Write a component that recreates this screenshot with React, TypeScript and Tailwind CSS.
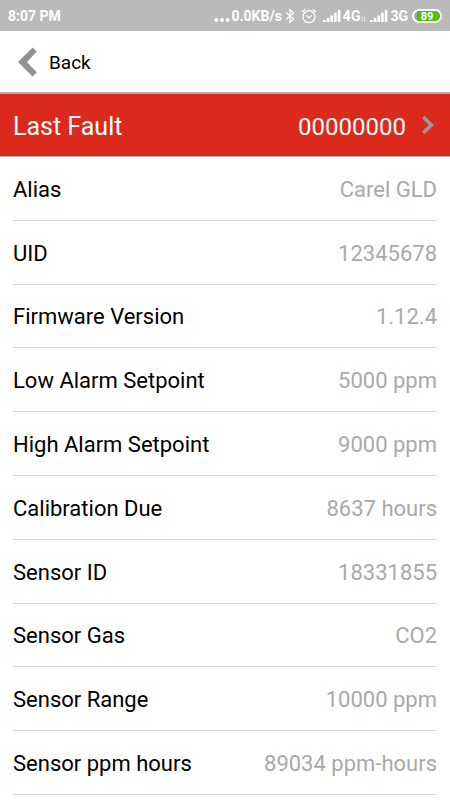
import React from 'react';

type Reading = {
  label: string;
  value: string;
};

const readings: Reading[] = [
  { label: 'Alias', value: 'Carel GLD' },
  { label: 'UID', value: '12345678' },
  { label: 'Firmware Version', value: '1.12.4' },
  { label: 'Low Alarm Setpoint', value: '5000 ppm' },
  { label: 'High Alarm Setpoint', value: '9000 ppm' },
  { label: 'Calibration Due', value: '8637 hours' },
  { label: 'Sensor ID', value: '18331855' },
  { label: 'Sensor Gas', value: 'CO2' },
  { label: 'Sensor Range', value: '10000 ppm' },
  { label: 'Sensor ppm hours', value: '89034 ppm-hours' },
];

const SignalBars: React.FC = () => (
  <svg width="18" height="14" viewBox="0 0 18 14" fill="currentColor" aria-hidden="true">
    <rect x="0" y="11" width="2.6" height="2" />
    <rect x="3.7" y="9" width="2.6" height="4" />
    <rect x="7.4" y="6.5" width="2.6" height="6.5" />
    <rect x="11.1" y="3.7" width="2.6" height="9.3" />
    <rect x="14.8" y="1" width="2.6" height="12" />
  </svg>
);

const BluetoothIcon: React.FC = () => (
  <svg width="10" height="16" viewBox="0 0 10 16" fill="none" stroke="currentColor" strokeWidth="1.2" aria-hidden="true">
    <path d="M1 4.5 8.5 11 5 14.3V1.7L8.5 5 1 11.5" />
  </svg>
);

const AlarmIcon: React.FC = () => (
  <svg width="16" height="16" viewBox="0 0 16 16" fill="none" stroke="currentColor" strokeWidth="1.3" aria-hidden="true">
    <circle cx="8" cy="8.7" r="6" />
    <path d="M1 4 4.3 1.3M15 4 11.7 1.3M5.3 7.5 8 9.7l2.7-2.2" />
  </svg>
);

const DataArrows: React.FC = () => (
  <svg width="5" height="6" viewBox="0 0 5 6" fill="none" stroke="currentColor" strokeWidth="0.8" opacity="0.7" aria-hidden="true">
    <path d="M1.3 0v5M0 3.8l1.3 1.4M3.7 6V1M5 2.2 3.7.8" />
  </svg>
);

const StatusBar: React.FC = () => (
  <div className="flex h-[31px] shrink-0 items-center justify-between bg-[#bababa] pt-px px-2 text-[14px] font-bold text-white">
    <span>8:07 PM</span>
    <div className="flex items-center">
      <svg width="17" height="14" viewBox="0 0 17 14" fill="currentColor" aria-hidden="true">
        <circle cx="2.3" cy="11" r="1.9" />
        <circle cx="8" cy="11" r="1.9" />
        <circle cx="13.7" cy="11" r="1.9" />
      </svg>
      <span>0.0KB/s</span>
      <span className="ml-[3px]"><BluetoothIcon /></span>
      <span className="ml-[6px]"><AlarmIcon /></span>
      <span className="ml-[6px]"><SignalBars /></span>
      <span className="ml-[2px]">4G</span>
      <span className="ml-px pt-[5px]"><DataArrows /></span>
      <span className="ml-[4px]"><SignalBars /></span>
      <span className="ml-[2px]">3G</span>
      <span className="ml-[4px] flex h-[14px] w-[30px] overflow-hidden rounded-full border-2 border-white bg-[#a8a8a8] pl-[3px]">
        <span className="flex w-full items-center justify-center bg-[#4cbf14] pt-px pr-[3px] text-[11px] leading-[10px] font-bold">
          89
        </span>
      </span>
    </div>
  </div>
);

export default function App() {
  return (
    <div className="flex min-h-screen flex-col bg-white font-[Roboto,sans-serif] text-black">
      <StatusBar />

      <header className="flex h-[61px] shrink-0 items-center px-4 pt-px">
        <button type="button" className="flex items-center gap-3 text-[19px]">
          <svg width="21" height="30" viewBox="0 0 21 30" fill="#919191" aria-hidden="true">
            <path d="M16.5.5 20.8 4.5 11 15l9.8 10.5-4.3 4L2 15z" />
          </svg>
          <span className="pt-[3px]">Back</span>
        </button>
      </header>

      <button
        type="button"
        className="flex h-[65px] w-full shrink-0 items-center border-t-2 border-b border-t-[#b9a9a9] border-b-[#c0b4b4] bg-[#db291c] pr-4 pl-[13px] text-[25px] text-white"
      >
        <span className="pt-1">Last Fault</span>
        <span className="ml-auto pt-1 text-[24px]">00000000</span>
        <svg className="ml-4" width="12" height="20" viewBox="0 0 12 20" fill="#999999" aria-hidden="true">
          <path d="M2.5.7 12 10 2.5 19.3 0 16.7 6.8 10 0 3.3z" />
        </svg>
      </button>

      <dl className="grid flex-1 auto-rows-fr px-[13px] pb-[5px] text-[22px]">
        {readings.map((item) => (
          <div key={item.label} className="flex items-center justify-between border-b border-[#d6d6d6] pt-[2px]">
            <dt>{item.label}</dt>
            <dd className="text-[#a9a9a9]">{item.value}</dd>
          </div>
        ))}
      </dl>
    </div>
  );
}
